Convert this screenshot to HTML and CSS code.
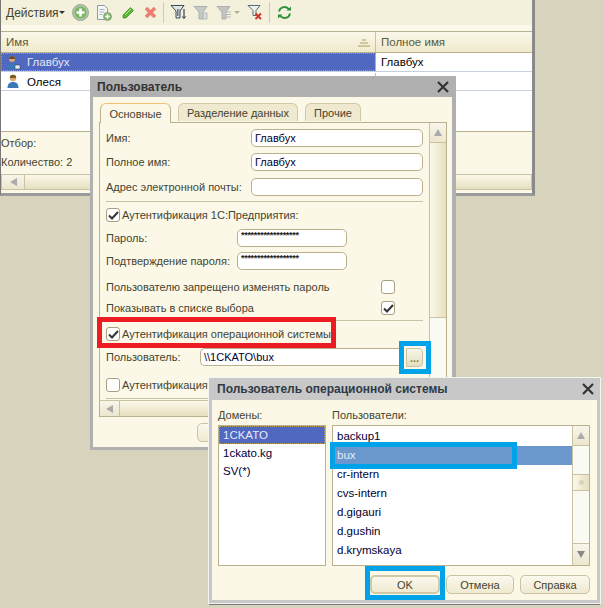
FILE: index.html
```html
<!DOCTYPE html>
<html lang="ru">
<head>
    <meta charset="UTF-8">
    <title>Пользователь</title>
    <link rel="stylesheet" href="styles.css">
</head>
<body>
    <!-- список пользователей -->
    <div class="window main-window">
        <div class="toolbar">
            <span class="actions">Действия</span>
            <span class="caret"></span>
            <svg class="tool tool-add" width="17" height="17" viewBox="0 0 17 17"><circle cx="8.500" cy="8.500" r="8" fill="#b4c4ac" stroke="#98a890"/><circle cx="8.500" cy="8.500" r="6" fill="#79b563"/><path d="M8.500 4.500v8M4.500 8.500h8" stroke="#fff" stroke-width="2.600"/></svg>
            <svg class="tool tool-copy" width="16" height="16" viewBox="0 0 16 16"><path d="M1.500 .500h7l3 3v11h-10z" fill="#f4f6f4" stroke="#8a9aa6"/><path d="M3.500 4.500h5M3.500 7h5M3.500 9.500h3" stroke="#a8b4bc"/><circle cx="11.500" cy="11.500" r="4" fill="#7fb56a" stroke="#8c9a80" stroke-width=".7"/><path d="M11.500 9.200v4.600M9.200 11.500h4.600" stroke="#fff" stroke-width="1.500"/></svg>
            <svg class="tool tool-edit" width="13" height="13" viewBox="0 0 13 13"><path d="M1 9 8.500 1.500l3 3L4 12 1 12z" fill="#57b533" stroke="#3f8f23" stroke-width=".7"/><path d="M3 9 9 3" stroke="#b5e59a"/></svg>
            <svg class="tool tool-del" width="13" height="13" viewBox="0 0 13 13"><path d="M2 2l9 9M11 2l-9 9" stroke="#ee7f75" stroke-width="3.600"/></svg>
            <span class="tool-sep sep-a"></span>
            <svg class="tool tool-filter" width="17" height="17" viewBox="0 0 17 17"><path d="M1 1.500h13L10 7v7H6V7z" fill="#dfe3e3" stroke="#3c4a55"/><path d="M7.500 5v7M9 5v7" stroke="#6c7a85"/><path d="M14 5v9M12.500 12.500l1.500 2 1.500-2" stroke="#223" fill="none"/></svg>
            <svg class="tool tool-filter2" width="16" height="16" viewBox="0 0 16 16"><path d="M1 1.500h13L10 7v7H6V7z" fill="#c6cac6" stroke="#aeb2ae"/><path d="M10 8h4v6h-4z" fill="#d9dcd9" stroke="#b8bcb8"/></svg>
            <svg class="tool tool-filter3" width="16" height="16" viewBox="0 0 16 16"><path d="M1 1.500h13L10 7v7H6V7z" fill="#c2c6c2" stroke="#aeb2ae"/><path d="M9 7h6M9 9.500h6M9 12h6" stroke="#b8bcb8"/></svg>
            <span class="caret caret-muted"></span>
            <svg class="tool tool-clear" width="16" height="17" viewBox="0 0 16 17"><path d="M1 1.500h12L9 6.500v5H6v-5z" fill="#eef0f0" stroke="#5c6a75"/><path d="M8.500 9.500l5.500 5.500M14 9.500 8.500 15" stroke="#c8372d" stroke-width="2"/></svg>
            <span class="tool-sep sep-b"></span>
            <svg class="tool tool-refresh" width="15" height="15" viewBox="0 0 15 15"><path d="M2 6.500A5.500 5.500 0 0 1 12 4.500" fill="none" stroke="#2f8f3a" stroke-width="1.800"/><path d="M13 8.500A5.500 5.500 0 0 1 3 10.500" fill="none" stroke="#2f8f3a" stroke-width="1.800"/><path d="M9.500 5.500h4.500V1.500z" fill="#2f8f3a"/><path d="M5.500 9.500H1v4z" fill="#2f8f3a"/></svg>
        </div>
        <div class="toolbar-strip"></div>
        <div class="table-head">
            <div class="col-name">Имя
                <svg class="sort-icon" width="12" height="9" viewBox="0 0 12 9"><path d="M4 1h4v2H4zM2 4h8v2H2zM0 7h12v2H0z" fill="#cfc89f"/></svg>
            </div>
            <div class="col-full">Полное имя</div>
        </div>
        <div class="table-row">
            <div class="col-name cell-selected">
                <svg class="user-icon" width="15" height="15" viewBox="0 0 15 15"><circle cx="6" cy="4" r="3" fill="#e0a870"/><path d="M6 1a3 3 0 0 0-3 3h6a3 3 0 0 0-3-3z" fill="#6b4a2a"/><path d="M1 14c0-4 2-6 5-6s5 2 5 6z" fill="#3c78b8"/><path d="M9 10h5v4H9z" fill="#e8eef4" stroke="#345" stroke-width=".6"/></svg>
                Главбух
            </div>
            <div class="col-full">Главбух</div>
        </div>
        <div class="table-row row-second">
            <div class="col-name">
                <svg class="user-icon" width="15" height="15" viewBox="0 0 15 15"><circle cx="7" cy="4" r="3.200" fill="#e0a870"/><path d="M7 .800a3.200 3.200 0 0 0-3.200 3.200h6.400A3.200 3.200 0 0 0 7 .800z" fill="#7a5a24"/><path d="M1.500 14c0-4 2-6 5.500-6s5.500 2 5.500 6z" fill="#3c78b8"/></svg>
                Олеся
            </div>
            <div class="col-full"></div>
        </div>
        <div class="table-empty"></div>
        <div class="main-footer">
            <div class="footer-line first">Отбор:</div>
            <div class="footer-line">Количество: 2</div>
            <div class="hscroll">
                <span class="scroll-btn"><span class="arrow-left"></span></span>
            </div>
        </div>
    </div>

    <!-- карточка пользователя -->
    <div class="window dialog user-dialog">
        <div class="dialog-title">
            <span>Пользователь</span>
            <svg class="close-icon" width="12" height="12" viewBox="0 0 12 12"><path d="M1 1l10 10M11 1 1 11" stroke="#333" stroke-width="2.200"/></svg>
        </div>
        <div class="dialog-body">
            <div class="tabs">
                <div class="tab tab-active">Основные</div>
                <div class="tab tab-data">Разделение данных</div>
                <div class="tab tab-other">Прочие</div>
            </div>
            <div class="panel">
                <div class="panel-main">
                    <div class="panel-form">
                        <div class="form-row row-name"><label class="label-wide">Имя:</label><div class="input input-wide">Главбух</div></div>
                        <div class="form-row row-full"><label class="label-wide">Полное имя:</label><div class="input input-wide">Главбух</div></div>
                        <div class="form-row row-mail"><label class="label-wide">Адрес электронной почты:</label><div class="input input-wide"></div></div>
                        <div class="rule rule-1"></div>
                        <div class="check-row row-auth">
                            <span class="checkbox"><svg width="11" height="9" viewBox="0 0 11 9"><path d="M1 4.500 4 7.500 10 1" fill="none" stroke="#333" stroke-width="2"/></svg></span>
                            Аутентификация 1С:Предприятия:
                        </div>
                        <div class="form-row row-pass"><label class="label-pass">Пароль:</label><div class="input input-pass">******************</div></div>
                        <div class="form-row row-confirm"><label class="label-pass">Подтверждение пароля:</label><div class="input input-pass">******************</div></div>
                        <div class="option-row row-forbid">Пользователю запрещено изменять пароль<span class="checkbox"></span></div>
                        <div class="option-row row-show">Показывать в списке выбора<span class="checkbox"><svg width="11" height="9" viewBox="0 0 11 9"><path d="M1 4.500 4 7.500 10 1" fill="none" stroke="#333" stroke-width="2"/></svg></span></div>
                        <div class="rule rule-2"></div>
                        <div class="check-row row-os">
                            <span class="checkbox"><svg width="11" height="9" viewBox="0 0 11 9"><path d="M1 4.500 4 7.500 10 1" fill="none" stroke="#333" stroke-width="2"/></svg></span>
                            Аутентификация операционной системы:
                        </div>
                        <div class="form-row row-osuser">
                            <label class="label-os">Пользователь:</label>
                            <div class="input input-os">\\1CKATO\bux</div>
                            <div class="pick-btn">...</div>
                        </div>
                        <div class="check-row row-openid"><span class="checkbox"></span>Аутентификация</div>
                        <div class="rule rule-3"></div>
                    </div>
                    <div class="vscroll panel-vscroll">
                        <span class="scroll-btn"><span class="arrow-up"></span></span>
                        <span class="thumb-long"></span>
                    </div>
                </div>
                <div class="hscroll panel-hscroll">
                    <span class="scroll-btn"><span class="arrow-left"></span></span>
                </div>
            </div>
            <div class="dialog-buttons">
                <div class="btn"></div>
            </div>
        </div>
    </div>

    <div class="mark mark-red mark-os"></div>
    <div class="mark mark-blue mark-pick"></div>

    <!-- выбор пользователя ОС -->
    <div class="window dialog os-dialog">
        <div class="dialog-title os-title">
            <span>Пользователь операционной системы</span>
            <svg class="close-icon" width="12" height="12" viewBox="0 0 12 12"><path d="M1 1l10 10M11 1 1 11" stroke="#333" stroke-width="2.200"/></svg>
        </div>
        <div class="os-body">
            <div class="os-lists">
                <div class="os-column domains">
                    <div class="list-label">Домены:</div>
                    <div class="list">
                        <div class="list-item item-selected">1CKATO</div>
                        <div class="list-item">1ckato.kg</div>
                        <div class="list-item">SV(*)</div>
                    </div>
                </div>
                <div class="os-column users">
                    <div class="list-label">Пользователи:</div>
                    <div class="list list-users">
                        <div class="list-rows">
                            <div class="user-item">backup1</div>
                            <div class="user-item item-active">bux</div>
                            <div class="user-item">cr-intern</div>
                            <div class="user-item">cvs-intern</div>
                            <div class="user-item">d.gigauri</div>
                            <div class="user-item">d.gushin</div>
                            <div class="user-item">d.krymskaya</div>
                            <div class="user-item">d.kuzmin</div>
                        </div>
                        <div class="vscroll users-vscroll">
                            <span class="scroll-btn"><span class="arrow-up"></span></span>
                            <span class="track-top"></span>
                            <span class="thumb-short"><span class="thumb-dot"></span></span>
                            <span class="track-bottom"></span>
                            <span class="scroll-btn"><span class="arrow-down"></span></span>
                        </div>
                    </div>
                </div>
            </div>
            <div class="os-buttons">
                <div class="btn btn-ok">OK</div>
                <div class="btn btn-cancel">Отмена</div>
                <div class="btn btn-help">Справка</div>
            </div>
        </div>
    </div>

    <div class="mark mark-blue mark-bux"></div>
    <div class="mark mark-blue mark-ok"></div>
</body>
</html>
```

FILE: styles.css
```css
* {
    margin: 0;
    padding: 0;
    box-sizing: border-box;
}

body {
    width: 603px;
    height: 608px;
    position: relative;
    overflow: hidden;
    background: #d8d3bd;
    font-family: "Liberation Sans", Arial, sans-serif;
    font-size: 11px;
    color: #44442f;
}

.window {
    position: absolute;
}

/* main window */

.main-window {
    left: 0;
    top: 0;
    width: 535px;
    height: 196px;
    background: #fff;
    border-left: 1px solid #777;
    border-right: 3px solid #8a8a8a;
    border-bottom: 3px solid #9a9a9a;
    display: flex;
    flex-direction: column;
}

.toolbar {
    height: 25px;
    background: #f3f0dc;
    display: flex;
    align-items: center;
    flex-shrink: 0;
}

.actions {
    margin-left: 5px;
    font-size: 12px;
    width: 53px;
}

.caret {
    width: 0;
    height: 0;
    border: 3px solid transparent;
    border-top: 3px solid #333;
    border-bottom: 0;
}

.caret-muted {
    border-top-color: #b8b08a;
    margin-left: 2px;
}

.tool-add { margin-left: 7px; }
.tool-copy { margin-left: 7px; }
.tool-edit { margin-left: 10px; }
.tool-del { margin-left: 9px; }
.tool-filter { margin-left: 6px; }
.tool-filter2 { margin-left: 6px; }
.tool-filter3 { margin-left: 7px; }
.tool-clear { margin-left: 7px; }
.tool-refresh { margin-left: 7px; }

.tool-sep {
    width: 1px;
    height: 21px;
    background: #cfcab0;
    margin-left: 6px;
}

.toolbar-strip {
    height: 6px;
    background: #fbf9ec;
    flex-shrink: 0;
}

.table-head {
    height: 22px;
    display: flex;
    flex-shrink: 0;
    background: linear-gradient(#fbf8ea, #f0e9cb);
    border-top: 1px solid #b9b08e;
    border-bottom: 1px solid #b9b08e;
    color: #5a5a40;
    line-height: 20px;
    font-size: 11.500px;
}

.col-name {
    width: 375px;
    padding-left: 5px;
    position: relative;
    display: flex;
    align-items: center;
    border-right: 1px solid #c9c3a3;
}

.col-full {
    flex: 1;
    padding-left: 5px;
    display: flex;
    align-items: center;
}

.sort-icon {
    position: absolute;
    right: 5px;
    top: 6px;
}

.table-row {
    height: 19px;
    display: flex;
    flex-shrink: 0;
    color: #000;
    border-bottom: 1px solid #c7d0de;
    font-size: 11.500px;
}

.row-second {
    padding-top: 1px;
}

.cell-selected {
    background: #5068bf;
    color: #e6e8f5;
    outline: 1px dotted #b9a050;
    outline-offset: -1px;
}

.user-icon {
    margin-right: 6px;
    flex-shrink: 0;
}

.table-empty {
    flex: 1;
}

.main-footer {
    height: 62px;
    background: #fbf8e8;
    border-top: 1px solid #b9b08e;
    color: #44442f;
    flex-shrink: 0;
}

.footer-line {
    height: 19px;
    line-height: 19px;
}

.footer-line.first {
    margin-top: 2px;
}

/* scrollbars */

.hscroll {
    height: 16px;
    margin-top: 2px;
    background: linear-gradient(#fbf8e8, #e6dfc0);
    border: 1px solid #c9c3a3;
    display: flex;
}

.scroll-btn {
    display: flex;
    align-items: center;
    justify-content: center;
    background: linear-gradient(#f8f6ea, #ece6cc);
    flex-shrink: 0;
}

.hscroll .scroll-btn {
    width: 23px;
    border-right: 1px solid #c9c3a3;
}

.vscroll .scroll-btn {
    height: 20px;
    border-bottom: 1px solid #c9c3a3;
}

.arrow-left {
    border: 4px solid transparent;
    border-right: 7px solid #aaa;
    border-left: 0;
}

.arrow-up {
    border: 4px solid transparent;
    border-bottom: 7px solid #aaa;
    border-top: 0;
}

.arrow-down {
    border: 4px solid transparent;
    border-top: 7px solid #888;
    border-bottom: 0;
}

.vscroll {
    width: 17px;
    display: flex;
    flex-direction: column;
    border-left: 1px solid #c9c3a3;
    flex-shrink: 0;
}

/* dialogs */

.dialog {
    display: flex;
    flex-direction: column;
}

.user-dialog {
    left: 90px;
    top: 76px;
    width: 366px;
    height: 374px;
    background: #b0b0b0;
    padding: 0 4px 3px 3px;
}

.dialog-title {
    height: 21px;
    flex-shrink: 0;
    display: flex;
    align-items: center;
    justify-content: space-between;
    font-size: 12px;
    font-weight: bold;
    color: #333;
    padding: 0 1px 0 4px;
}

.dialog-title .close-icon {
    margin-right: 2px;
}

.dialog-body {
    flex: 1;
    background: #fbf8e8;
    padding: 6px 6px 0;
    display: flex;
    flex-direction: column;
}

.tabs {
    display: flex;
    height: 19px;
    padding-left: 1px;
    gap: 7px;
    position: relative;
    z-index: 1;
}

.tab {
    height: 18px;
    border: 1px solid #cfc9a8;
    border-bottom: 0;
    border-radius: 6px 6px 0 0;
    background: #efe9d0;
    color: #44442f;
    display: flex;
    align-items: center;
    justify-content: center;
}

.tab-active {
    width: 71px;
    height: 20px;
    background: #fbf8e8;
    border-color: #b9b08e;
    border-top-color: #f2c070;
}

.tab-data {
    width: 120px;
}

.tab-other {
    width: 56px;
}

.panel {
    width: 348px;
    height: 295px;
    border: 1px solid #b9b08e;
    display: flex;
    flex-direction: column;
    flex-shrink: 0;
}

.panel-main {
    flex: 1;
    display: flex;
    min-height: 0;
}

.panel-form {
    flex: 1;
    padding-left: 6px;
    overflow: hidden;
}

.panel-vscroll {
    background: #fafaf4;
}

.thumb-long {
    height: 175px;
    background: linear-gradient(90deg, #fbf8e8, #e6dfc0);
    border-bottom: 1px solid #c9c3a3;
}

.panel-hscroll {
    margin-top: 0;
    border-width: 1px 0 0;
}

.panel-hscroll .scroll-btn {
    width: 20px;
}

.form-row {
    display: flex;
    align-items: center;
    height: 18px;
}

.form-row label {
    flex-shrink: 0;
    white-space: nowrap;
}

.label-wide { width: 145px; }
.label-pass { width: 131px; }
.label-os { width: 94px; }

.input {
    height: 18px;
    line-height: 17px;
    background: #fff;
    border: 1px solid #b9b08e;
    border-radius: 5px;
    padding-left: 3px;
    color: #000033;
    white-space: nowrap;
}

.input-wide { width: 172px; }

.input-pass {
    width: 110px;
    font-size: 9px;
    font-weight: bold;
    line-height: 10px;
    letter-spacing: -0.300px;
    color: #222;
}

.input-os {
    width: 203px;
    border-right: 0;
    border-left: 1px solid #b9b08e;
    border-radius: 5px 0 0 5px;
}

.pick-btn {
    width: 17px;
    height: 19px;
    margin-left: 3px;
    background: linear-gradient(#f8f6ea, #e6dfc0);
    border: 1px solid #c9c3a3;
    border-radius: 0 4px 4px 0;
    color: #8a7a3a;
    font-weight: bold;
    text-align: center;
    line-height: 18px;
}

.row-name { margin-top: 6px; }
.row-full { margin-top: 6px; }
.row-mail { margin-top: 7px; }
.row-pass { margin-top: 7px; }
.row-confirm { margin-top: 5px; }
.row-osuser { margin-top: 7px; }

.rule {
    height: 1px;
    background: #c9c3a3;
    margin-right: 6px;
}

.rule-1 { margin-top: 5px; }
.rule-2 { margin-top: 5px; }
.rule-3 { margin-top: 6px; }

.check-row {
    height: 14px;
    display: flex;
    align-items: center;
    gap: 2px;
    white-space: nowrap;
}

.row-auth { margin-top: 6px; }
.row-os { margin-top: 6px; }
.row-openid { margin-top: 12px; }

.checkbox {
    width: 14px;
    height: 14px;
    flex-shrink: 0;
    background: #fff;
    border: 1px solid #a8a080;
    border-radius: 3px;
    display: flex;
    align-items: center;
    justify-content: center;
}

.option-row {
    height: 14px;
    display: flex;
    align-items: center;
    justify-content: space-between;
    padding-right: 34px;
    white-space: nowrap;
}

.row-forbid { margin-top: 10px; }
.row-show { margin-top: 7px; }

.dialog-buttons {
    padding: 6px 0 0 98px;
}

.btn {
    height: 19px;
    width: 70px;
    border: 1px solid #c9c3a3;
    border-radius: 5px;
    background: linear-gradient(#fbf9ee, #efe9d0);
    color: #44442f;
    display: flex;
    align-items: center;
    justify-content: center;
}

/* os user dialog */

.os-dialog {
    left: 209px;
    top: 378px;
    width: 391px;
    height: 225px;
    background: #c8c8c8;
    padding: 0 3px 3px;
    outline: 1px solid #f4f4f0;
    box-shadow: 0 2px 0 #777;
}

.os-title {
    height: 22px;
    padding-left: 5px;
    color: #2f3a45;
}

.os-body {
    flex: 1;
    background: #fbf8e8;
    padding: 0 7px 0 6px;
    display: flex;
    flex-direction: column;
}

.os-lists {
    display: flex;
    gap: 6px;
}

.list-label {
    height: 25px;
    padding-top: 8px;
    line-height: 14px;
}

.domains {
    width: 108px;
}

.users {
    width: 258px;
}

.list {
    height: 141px;
    background: #fff;
    border: 1px solid #b9b08e;
    color: #000033;
    font-size: 11.500px;
    overflow: hidden;
}

.list-item {
    height: 18px;
    line-height: 18px;
    padding-left: 4px;
}

.item-selected {
    background: #5068bf;
    color: #e6e8f5;
    outline: 1px dotted #b9a050;
    outline-offset: -1px;
}

.list-users {
    display: flex;
}

.list-rows {
    flex: 1;
    padding-top: 1px;
    overflow: hidden;
}

.user-item {
    height: 19px;
    line-height: 19px;
    padding-left: 4px;
}

.item-active {
    background: #6b97cf;
    color: #e6ecf5;
}

.users-vscroll {
    background: #fafaf4;
}

.track-top {
    height: 28px;
}

.thumb-short {
    height: 17px;
    background: linear-gradient(90deg, #fbf8e8, #e6dfc0);
    border-top: 1px solid #c9c3a3;
    border-bottom: 1px solid #c9c3a3;
    display: flex;
    align-items: center;
    justify-content: center;
}

.thumb-dot {
    width: 5px;
    height: 5px;
    border-radius: 50%;
    background: #d8d3bd;
}

.track-bottom {
    flex: 1;
    border-bottom: 1px solid #c9c3a3;
}

.users-vscroll .scroll-btn:last-child {
    height: 21px;
    border-bottom: 0;
}

.os-buttons {
    display: flex;
    justify-content: flex-end;
    gap: 6px;
    padding-top: 9px;
}

.btn-ok {
    border: 2px solid #cfc9a8;
}

.btn-cancel {
    width: 68px;
}

/* annotation frames */

.mark {
    position: absolute;
    background: transparent;
}

.mark-red {
    border: 5px solid #ed1c24;
}

.mark-blue {
    border: 5px solid #00a2e8;
}

.mark-os {
    left: 97px;
    top: 317px;
    width: 239px;
    height: 31px;
}

.mark-pick {
    left: 399px;
    top: 341px;
    width: 32px;
    height: 33px;
}

.mark-bux {
    left: 330px;
    top: 442px;
    width: 187px;
    height: 27px;
}

.mark-ok {
    left: 365px;
    top: 566px;
    width: 80px;
    height: 34px;
}
```
